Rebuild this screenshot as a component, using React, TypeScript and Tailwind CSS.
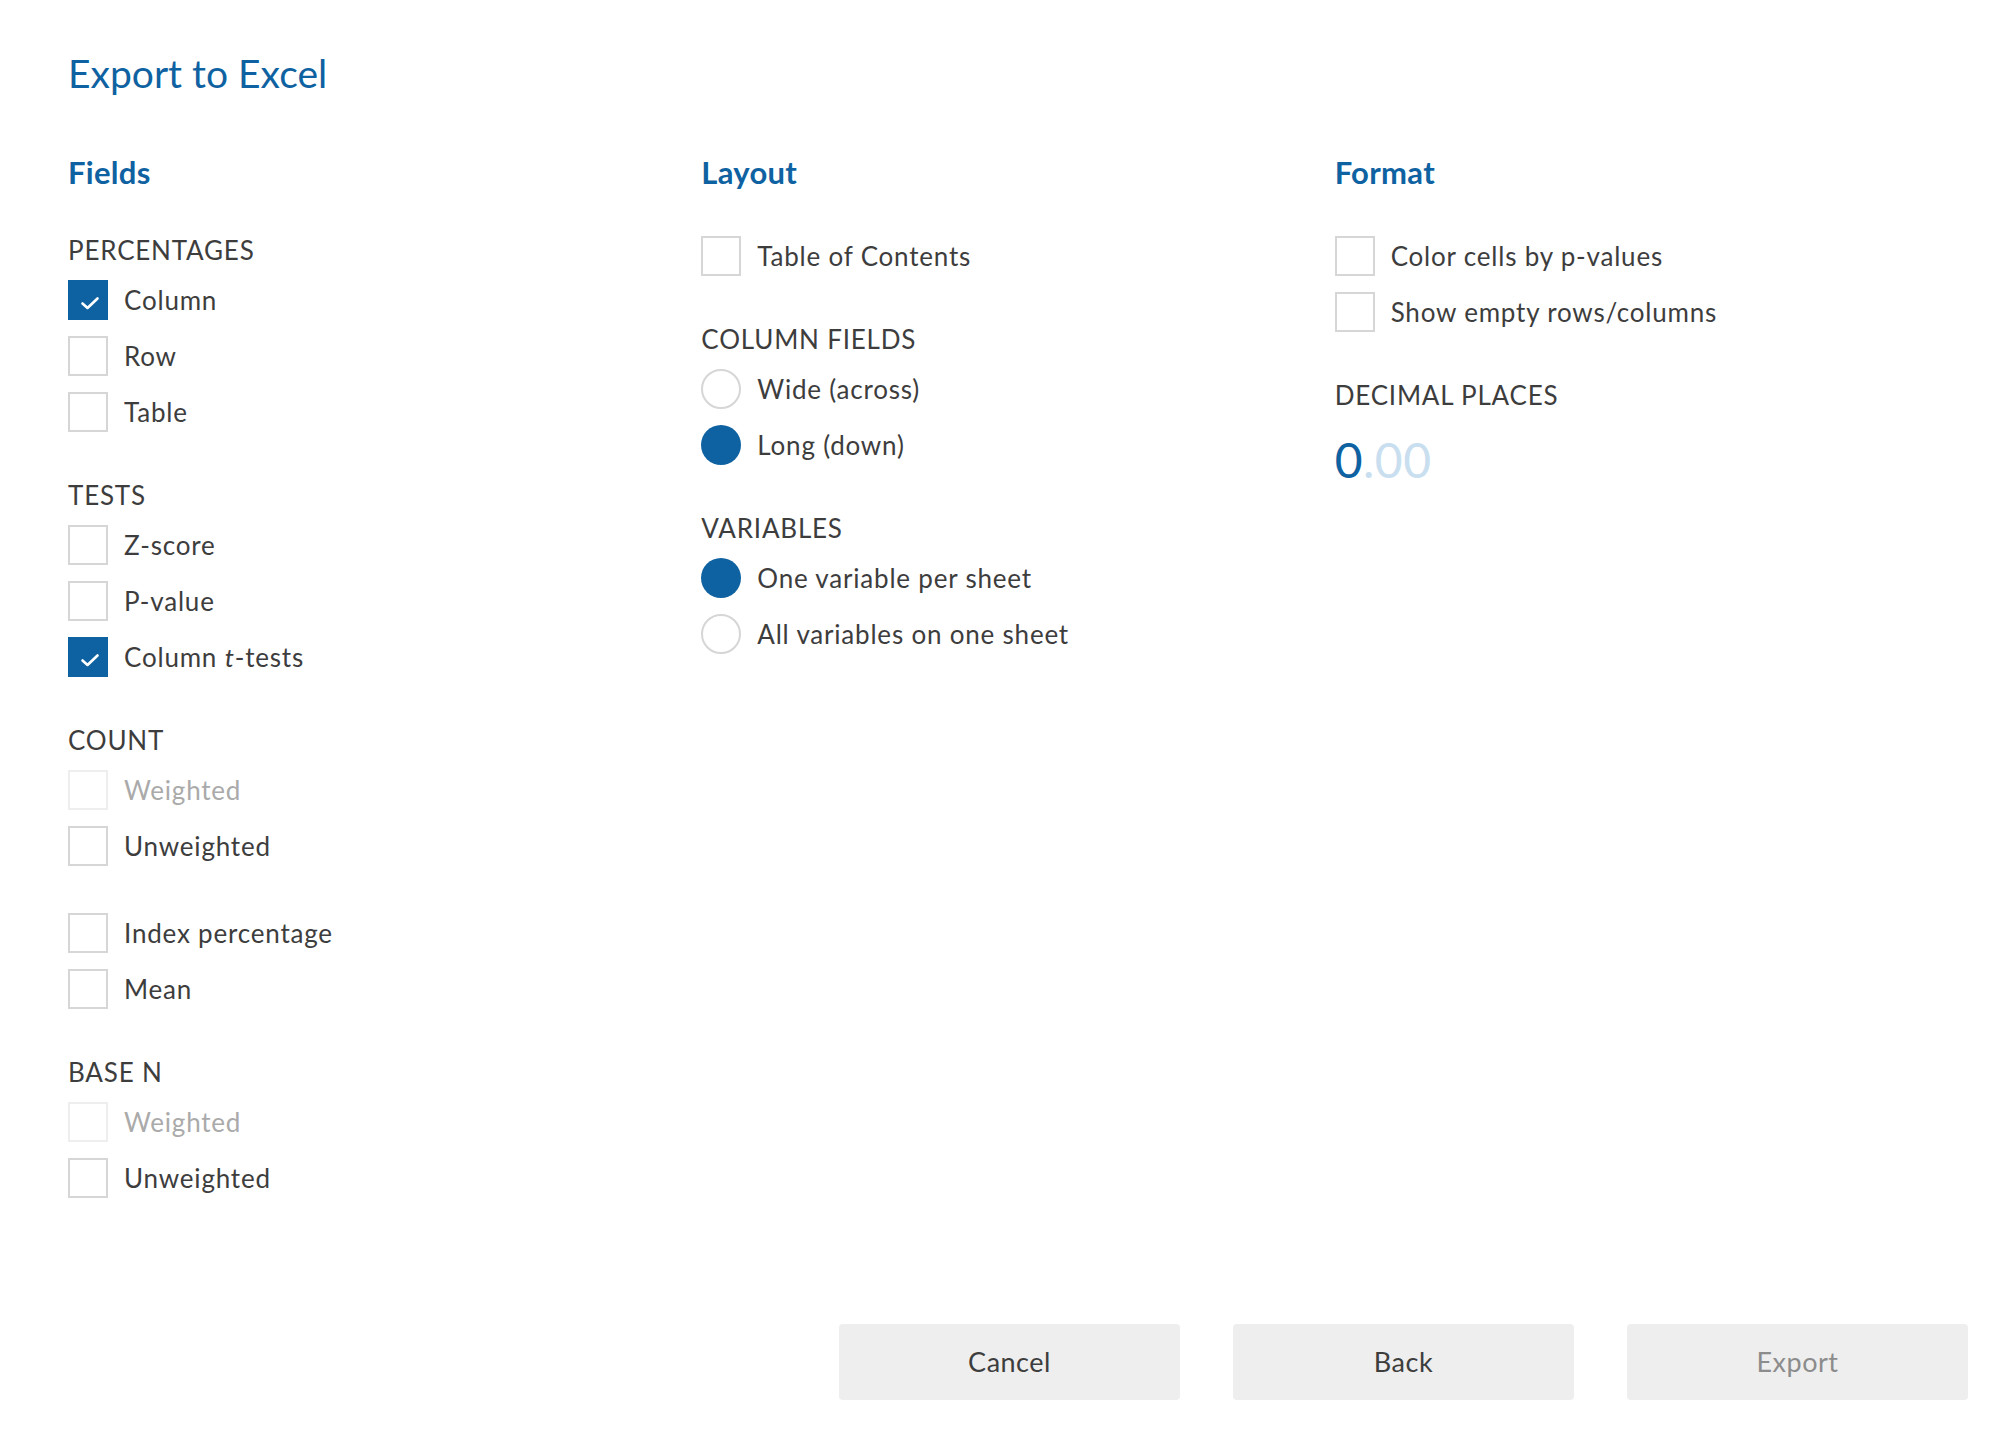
import React from "react";

const FONT = { fontFamily: "Lato, 'Open Sans', sans-serif" };

function Check() {
  return (
    <svg width="40" height="40" viewBox="0 0 40 40" className="block">
      <path d="M14.5 23.5 L19.5 28 L29.5 18.5" fill="none" stroke="#ffffff" strokeWidth="2.6" strokeLinecap="round" strokeLinejoin="round" />
    </svg>
  );
}

function CheckItem({ label, checked = false, disabled = false }: { label: React.ReactNode; checked?: boolean; disabled?: boolean }) {
  return (
    <div className="flex items-center h-10 gap-4">
      {checked ? (
        <div className="w-10 h-10 bg-[#0f62a1] shrink-0">
          <Check />
        </div>
      ) : (
        <div className={`w-10 h-10 shrink-0 border-2 ${disabled ? "border-[#eeeeee]" : "border-[#d6d6d6]"} bg-white`} />
      )}
      <span className={`text-[26px] leading-8 tracking-[0.8px] ${disabled ? "text-[#aaaaaa]" : "text-[#3d3d3d]"}`}>{label}</span>
    </div>
  );
}

function RadioItem({ label, checked = false }: { label: string; checked?: boolean }) {
  return (
    <div className="flex items-center h-10 gap-4">
      {checked ? (
        <div className="w-10 h-10 rounded-full bg-[#0f62a1] shrink-0" />
      ) : (
        <div className="w-10 h-10 rounded-full border-2 border-[#d6d6d6] bg-white shrink-0" />
      )}
      <span className="text-[26px] leading-8 tracking-[0.8px] text-[#3d3d3d]">{label}</span>
    </div>
  );
}

function Group({ title, children, first = false }: { title?: string; children: React.ReactNode; first?: boolean }) {
  return (
    <div className={first ? "" : "mt-[47px]"}>
      {title && <div className="text-[26px] leading-8 tracking-[0.8px] text-[#3d3d3d] mb-[14px]">{title}</div>}
      <div className="flex flex-col gap-4">{children}</div>
    </div>
  );
}

function Heading({ children }: { children: React.ReactNode }) {
  return <div className="text-[31px] leading-9 font-bold tracking-[0.3px] text-[#0f62a1] mb-[44px]">{children}</div>;
}

export default function App() {
  return (
    <div className="w-[2000px] h-[1446px] bg-white relative" style={FONT}>
      <div className="pl-[68px] pr-[32px] pt-[49px]">
        <div className="text-[39px] leading-[48px] text-[#0f62a1]">Export to Excel</div>
        <div className="grid grid-cols-3 mt-[57px]">
          <div>
            <Heading>Fields</Heading>
            <Group title="PERCENTAGES" first>
              <CheckItem label="Column" checked />
              <CheckItem label="Row" />
              <CheckItem label="Table" />
            </Group>
            <Group title="TESTS">
              <CheckItem label="Z-score" />
              <CheckItem label="P-value" />
              <CheckItem label={<>Column <i>t</i>-tests</>} checked />
            </Group>
            <Group title="COUNT">
              <CheckItem label="Weighted" disabled />
              <CheckItem label="Unweighted" />
            </Group>
            <Group>
              <CheckItem label="Index percentage" />
              <CheckItem label="Mean" />
            </Group>
            <Group title="BASE N">
              <CheckItem label="Weighted" disabled />
              <CheckItem label="Unweighted" />
            </Group>
          </div>
          <div>
            <Heading>Layout</Heading>
            <div className="pt-[2px]">
              <Group first>
                <CheckItem label="Table of Contents" />
              </Group>
              <Group title="COLUMN FIELDS">
                <RadioItem label="Wide (across)" />
                <RadioItem label="Long (down)" checked />
              </Group>
              <Group title="VARIABLES">
                <RadioItem label="One variable per sheet" checked />
                <RadioItem label="All variables on one sheet" />
              </Group>
            </div>
          </div>
          <div>
            <Heading>Format</Heading>
            <div className="pt-[2px]">
              <Group first>
                <CheckItem label="Color cells by p-values" />
                <CheckItem label="Show empty rows/columns" />
              </Group>
              <Group title="DECIMAL PLACES">
                <div className="mt-[7px] text-[48px] leading-[56px] tracking-[0.5px]">
                  <span className="text-[#0f62a1]">0</span>
                  <span className="text-[#c9dff0]">.00</span>
                </div>
              </Group>
            </div>
          </div>
        </div>
        <div className="flex justify-end gap-[53px] mt-[126px]">
          <button className="w-[341px] h-[76px] rounded-[4px] bg-[#eeeeee] text-[27px] tracking-[0.5px] text-[#3d3d3d]">Cancel</button>
          <button className="w-[341px] h-[76px] rounded-[4px] bg-[#eeeeee] text-[27px] tracking-[0.5px] text-[#3d3d3d]">Back</button>
          <button className="w-[341px] h-[76px] rounded-[4px] bg-[#eeeeee] text-[27px] tracking-[0.5px] text-[#8c8c8c]">Export</button>
        </div>
      </div>
    </div>
  );
}
